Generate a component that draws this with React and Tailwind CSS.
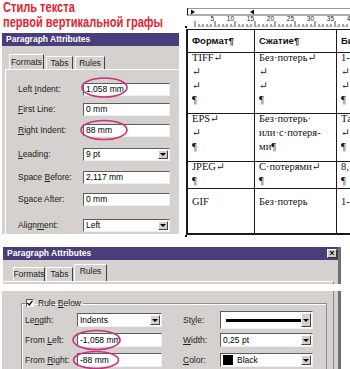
import React from "react";

const U = ({ c }) => <span className="underline underline-offset-[1px]">{c}</span>;

function Arrow() {
  return (
    <div className="absolute right-px top-px bottom-px w-[10px] bg-[#d4d0c8] border border-t-white border-l-white border-r-[#444] border-b-[#444] flex items-center justify-center">
      <div className="w-0 h-0 border-l-[3px] border-r-[3px] border-t-[3px] border-l-transparent border-r-transparent border-t-black" />
    </div>
  );
}

function Box({ children, className = "", arrow }) {
  return (
    <div
      className={`relative bg-white border border-t-[#5c5c5c] border-l-[#5c5c5c] border-r-[#efefef] border-b-[#efefef] flex items-center pl-[2px] text-black ${className}`}
    >
      {children}
      {arrow && <Arrow />}
    </div>
  );
}

function Row1({ label, value, mt, arrow }) {
  return (
    <div className={`flex items-center h-[13px] ${mt}`}>
      <div className="w-[65px] text-[#222]">{label}</div>
      <Box className="w-[87px] h-[13px]" arrow={arrow}>
        {value}
      </Box>
    </div>
  );
}

function Tab({ children, className = "" }) {
  return (
    <div
      className={`flex items-center justify-center border-t border-l border-t-white border-l-white border-r border-r-[#444] text-[#222] ${className}`}
    >
      {children}
    </div>
  );
}

function Ruler() {
  const ticks = [];
  for (let mm = 0; mm <= 40; mm++) {
    const x = 8 + mm * 4;
    const major = mm % 5 === 0;
    ticks.push(
      <line key={"t" + mm} x1={x} x2={x} y1={major ? 13 : 16} y2={19} stroke="#222" strokeWidth="0.8" />
    );
    if (mm % 2 === 1) {
      ticks.push(
        <line key={"h" + mm} x1={x + 2} x2={x + 2} y1={17.5} y2={19} stroke="#444" strokeWidth="0.6" />
      );
    }
    if (major && mm > 0) {
      ticks.push(
        <text key={"n" + mm} x={x - 1} y={12.5} fontSize="6.5" textAnchor="end" fill="#222" fontFamily="Liberation Sans, Arial, sans-serif">
          {mm}
        </text>
      );
    }
  }
  return (
    <svg width="163" height="19" viewBox="0 0 163 19">
      <rect x="0" y="0" width="163" height="19" fill="#fff" />
      <line x1="0.5" y1="0" x2="0.5" y2="7" stroke="#111" />
      <line x1="0" y1="0.5" x2="163" y2="0.5" stroke="#555" strokeWidth="0.6" />
      <line x1="0" y1="7" x2="163" y2="7" stroke="#333" strokeWidth="0.8" />
      <polygon points="4,1.5 8,4 4,6.5" fill="#111" />
      <polygon points="67,1.5 63,4 67,6.5" fill="#111" />
      {ticks}
    </svg>
  );
}

function Cell({ lines, className = "", serif = true }) {
  return (
    <div className={`overflow-hidden pl-[4px] ${className}`}>
      <div className="font-['Liberation_Serif','DejaVu_Serif',serif] text-[10.5px] leading-[14px] -mt-[2px] text-[#111] whitespace-nowrap">
        {lines.map((l, i) => (
          <div key={i}>{l}</div>
        ))}
      </div>
    </div>
  );
}

function TRow({ a, b, c, h }) {
  return (
    <div className={`flex border-b border-[#1a1a1a] ${h}`}>
      <Cell lines={a} className="w-[67px] border-r border-[#1a1a1a] shrink-0" />
      <Cell lines={b} className="w-[82px] border-r border-[#1a1a1a] shrink-0" />
      <Cell lines={c} className="flex-1" />
    </div>
  );
}

function Row2({ label, ctl, label2, ctl2 }) {
  return (
    <div className="flex items-center h-[20px]">
      <div className="w-[52px] text-[#222]">{label}</div>
      <div className="w-[85px]">{ctl}</div>
      <div className="w-[21px]" />
      <div className="w-[37px] text-[#222]">{label2}</div>
      <div className="w-[93px]">{ctl2}</div>
    </div>
  );
}

export default function App() {
  return (
    <div className="relative w-[350px] h-[369px] overflow-hidden bg-white font-['Liberation_Sans',Arial,sans-serif] text-[8.5px] leading-none">
      <div className="flex h-[247px]">
        {/* left column */}
        <div className="w-[184px] shrink-0 flex flex-col">
          <div className="h-[33px] pl-[3px] text-[#e3262f] font-bold text-[14px] leading-[15px]">
            <div className="origin-left scale-x-[0.79] whitespace-nowrap">Стиль текста</div>
            <div className="origin-left scale-x-[0.79] whitespace-nowrap">первой вертикальной графы</div>
          </div>
          <div className="ml-[2px] w-[177px] h-[201px] bg-[#d5d1ce] flex flex-col">
            <div className="h-[13px] bg-[#4a3d7c] text-white font-bold text-[8.5px] pl-[4px] flex items-center">
              Paragraph Attributes
            </div>
            <div className="h-[23px] flex items-end pl-[7px]">
              <Tab className="w-[35px] h-[15px]">Formats</Tab>
              <Tab className="w-[27px] h-[13px] ml-[2px]">Tabs</Tab>
              <Tab className="w-[30px] h-[13px] ml-[2px]">Rules</Tab>
            </div>
            <div className="flex-1 ml-[3px] border-t border-l border-t-white border-l-white pl-[12px] flex flex-col">
              <Row1 mt="mt-[13px]" label={<>Left <U c="I" />ndent:</>} value="1,058 mm" />
              <Row1 mt="mt-[7px]" label={<><U c="F" />irst Line:</>} value="0 mm" />
              <Row1 mt="mt-[8px]" label={<><U c="R" />ight Indent:</>} value="88 mm" />
              <Row1 mt="mt-[11px]" label={<><U c="L" />eading:</>} value="9 pt" arrow />
              <Row1 mt="mt-[10px]" label={<>Space <U c="B" />efore:</>} value="2,117 mm" />
              <Row1 mt="mt-[9px]" label={<>S<U c="p" />ace After:</>} value="0 mm" />
              <Row1 mt="mt-[13px]" label={<>Align<U c="m" />ent:</>} value="Left" arrow />
            </div>
          </div>
        </div>

        {/* right column */}
        <div className="relative flex-1 flex flex-col">
          <div className="mt-[8px] ml-[3px] h-[19px]">
            <Ruler />
          </div>
          <div className="absolute left-[1px] top-[26px] w-[2px] h-[2px] bg-black" />
          <div className="absolute left-[1px] top-[235px] w-[2px] h-[2px] bg-black" />
          <div className="mt-[2px] ml-[2px] border-l-2 border-b-2 border-t border-[#1a1a1a] flex flex-col">
            <div className="flex border-b border-[#1a1a1a] h-[23px] font-bold text-[9.5px] text-[#111]">
              <div className="w-[67px] border-r border-[#1a1a1a] shrink-0 flex items-center pl-[4px]">Формат¶</div>
              <div className="w-[82px] border-r border-[#1a1a1a] shrink-0 flex items-center pl-[4px]">Сжатие¶</div>
              <div className="flex-1 flex items-center pl-[4px] overflow-hidden whitespace-nowrap">Битность</div>
            </div>
            <TRow h="h-[61px]" a={["TIFF↵", "↵", "↵", "¶"]} b={["Без·потерь↵", "↵", "↵", "¶"]} c={["1-", "↵", "↵", "¶"]} />
            <TRow h="h-[48px]" a={["EPS↵", "↵", "¶"]} b={["Без·потерь·", "или·с·потеря-", "ми¶"]} c={["Та", "↵", "¶"]} />
            <TRow h="h-[27px]" a={["JPEG↵", "¶"]} b={["С·потерями↵", "¶"]} c={["8,", "¶"]} />
            <div className="flex h-[44px]">
              <Cell lines={["GIF"]} className="w-[67px] border-r border-[#1a1a1a] shrink-0 pt-[8px]" />
              <Cell lines={["Без·потерь"]} className="w-[82px] border-r border-[#1a1a1a] shrink-0 pt-[8px]" />
              <Cell lines={["1-"]} className="flex-1 pt-[8px]" />
            </div>
          </div>
        </div>
      </div>

      {/* second dialog, part A */}
      <div className="ml-[3px] w-[338px] bg-[#d5d1ce] border-r-[3px] border-r-[#716e70] flex flex-col">
        <div className="h-[13px] bg-[#4a3d7c] text-white font-bold pl-[4px] pr-[1px] flex items-center justify-between">
          <span>Paragraph Attributes</span>
          <div className="w-[10px] h-[9px] bg-[#d4d0c8] border border-t-white border-l-white border-r-[#333] border-b-[#333] flex items-center justify-center text-black text-[9px] font-bold leading-none">
            ×
          </div>
        </div>
        <div className="h-[21px] flex items-end pl-[10px]">
          <Tab className="w-[32px] h-[14px]">Formats</Tab>
          <Tab className="w-[27px] h-[14px] ml-[1px]">Tabs</Tab>
          <Tab className="w-[33px] h-[17px] ml-[1px] items-start pt-[2px]">Rules</Tab>
        </div>
        <div className="h-[3px] mr-[4px] border-t border-t-white border-r border-r-[#888]" />
      </div>

      <div className="h-[7px] bg-white" />

      {/* second dialog, part B */}
      <div className="ml-[2px] w-[339px] h-[78px] bg-[#d5d1ce] border-r-[3px] border-r-[#716e70]">
        <div className="h-full mr-[4px] border-r border-r-[#888] pl-[19px] pt-[7px]">
          <fieldset className="w-[306px] border border-[#8f8c8c] shadow-[inset_1px_1px_0_#fff] px-[3px] pt-[2px] h-[80px]">
            <legend className="ml-[1px] h-[10px]">
              <span className="flex items-center h-[10px] gap-[4px] pr-[2px] text-[#222]">
                <span className="w-[8px] h-[8px] bg-white border border-t-[#555] border-l-[#555] border-r-[#eee] border-b-[#eee] flex items-center justify-center">
                  <svg width="6" height="6" viewBox="0 0 6 6">
                    <path d="M0.5 3 L2.3 5 L5.5 0.8" stroke="#000" strokeWidth="1.3" fill="none" />
                  </svg>
                </span>
                <span>
                  Rule <U c="B" />elow
                </span>
              </span>
            </legend>
            <Row2
              label={<>Le<U c="n" />gth:</>}
              ctl={<Box className="w-[85px] h-[14px]" arrow>Indents</Box>}
              label2={<>St<U c="y" />le:</>}
              ctl2={
                <Box className="w-[93px] h-[18px]" arrow>
                  <div className="ml-[3px] w-[75px] h-[3px] bg-black" />
                </Box>
              }
            />
            <Row2
              label={<>From <U c="L" />eft:</>}
              ctl={<Box className="w-[85px] h-[14px]">-1,058 mm</Box>}
              label2={<><U c="W" />idth:</>}
              ctl2={<Box className="w-[93px] h-[14px]" arrow>0,25 pt</Box>}
            />
            <Row2
              label={<>From <U c="R" />ight:</>}
              ctl={<Box className="w-[85px] h-[14px]">-88 mm</Box>}
              label2={<><U c="C" />olor:</>}
              ctl2={
                <Box className="w-[93px] h-[14px]" arrow>
                  <div className="w-[10px] h-[10px] bg-black mr-[4px]" />
                  Black
                </Box>
              }
            />
          </fieldset>
        </div>
      </div>

      <svg className="absolute left-0 top-0 pointer-events-none" width="350" height="369" viewBox="0 0 350 369">
        <g fill="none" stroke="#c8327f" strokeWidth="1.6">
          <ellipse cx="104.5" cy="87.5" rx="22.5" ry="9.5" />
          <ellipse cx="104" cy="130" rx="23" ry="9.5" />
          <ellipse cx="96.5" cy="340" rx="23.5" ry="9.5" />
          <ellipse cx="96" cy="360" rx="22.5" ry="8.5" />
        </g>
      </svg>
    </div>
  );
}
